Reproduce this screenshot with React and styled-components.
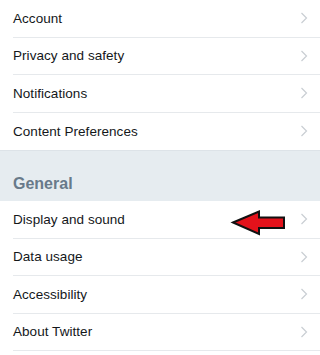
import React from "react";
import styled, { createGlobalStyle } from "styled-components";

const Global = createGlobalStyle`
  html, body { margin: 0; padding: 0; background: #fff; }
  body { font-family: "Liberation Sans", Arial, sans-serif; }
`;

const Page = styled.div`
  width: 320px;
  height: 355px;
  overflow: hidden;
  background: #fff;
`;

const Row = styled.div`
  position: relative;
  height: 37.5px;
  box-sizing: border-box;
  margin-left: 13px;
  padding-right: 12.5px;
  display: flex;
  align-items: center;
  justify-content: space-between;
  border-bottom: 1px solid #e6e9ec;
  ${(p) => (p.$last ? "border-bottom: none;" : "")}
`;

const Label = styled.span`
  font-size: 13.5px;
  color: #14171a;
  letter-spacing: 0.05px;
`;

const Section = styled.div`
  height: 51px;
  background: #e6ecf0;
  box-sizing: border-box;
  padding: 0 13px 8px;
  display: flex;
  align-items: flex-end;
  border-top: 1px solid #dde3e8;
`;

const SectionTitle = styled.span`
  font-size: 16px;
  font-weight: 700;
  color: #687a8a;
`;

const ArrowMark = styled.svg`
  position: absolute;
  left: 219px;
  top: 9px;
  width: 54px;
  height: 26px;
  overflow: visible;
`;

const Chevron = () => (
  <svg width="8" height="12" viewBox="0 0 8 12">
    <path d="M1.5 1 L6.5 6 L1.5 11" fill="none" stroke="#c9ced3" strokeWidth="1.2" />
  </svg>
);

const Item = ({ label, last, children }) => (
  <Row $last={last}>
    <Label>{label}</Label>
    {children}
    <Chevron />
  </Row>
);

export default function App() {
  return (
    <Page>
      <Global />
      <Item label="Account" />
      <Item label="Privacy and safety" />
      <Item label="Notifications" />
      <Item label="Content Preferences" last />
      <Section>
        <SectionTitle>General</SectionTitle>
      </Section>
      <Item label="Display and sound">
        <ArrowMark viewBox="0 0 54 26">
          <polygon
            points="1,12.5 27,1.5 27,7.5 52,7.5 52,18 27,18 27,24 1,12.5"
            fill="#e3121b"
            stroke="#111"
            strokeWidth="2"
            strokeLinejoin="miter"
          />
        </ArrowMark>
      </Item>
      <Item label="Data usage" />
      <Item label="Accessibility" />
      <Item label="About Twitter" />
    </Page>
  );
}
